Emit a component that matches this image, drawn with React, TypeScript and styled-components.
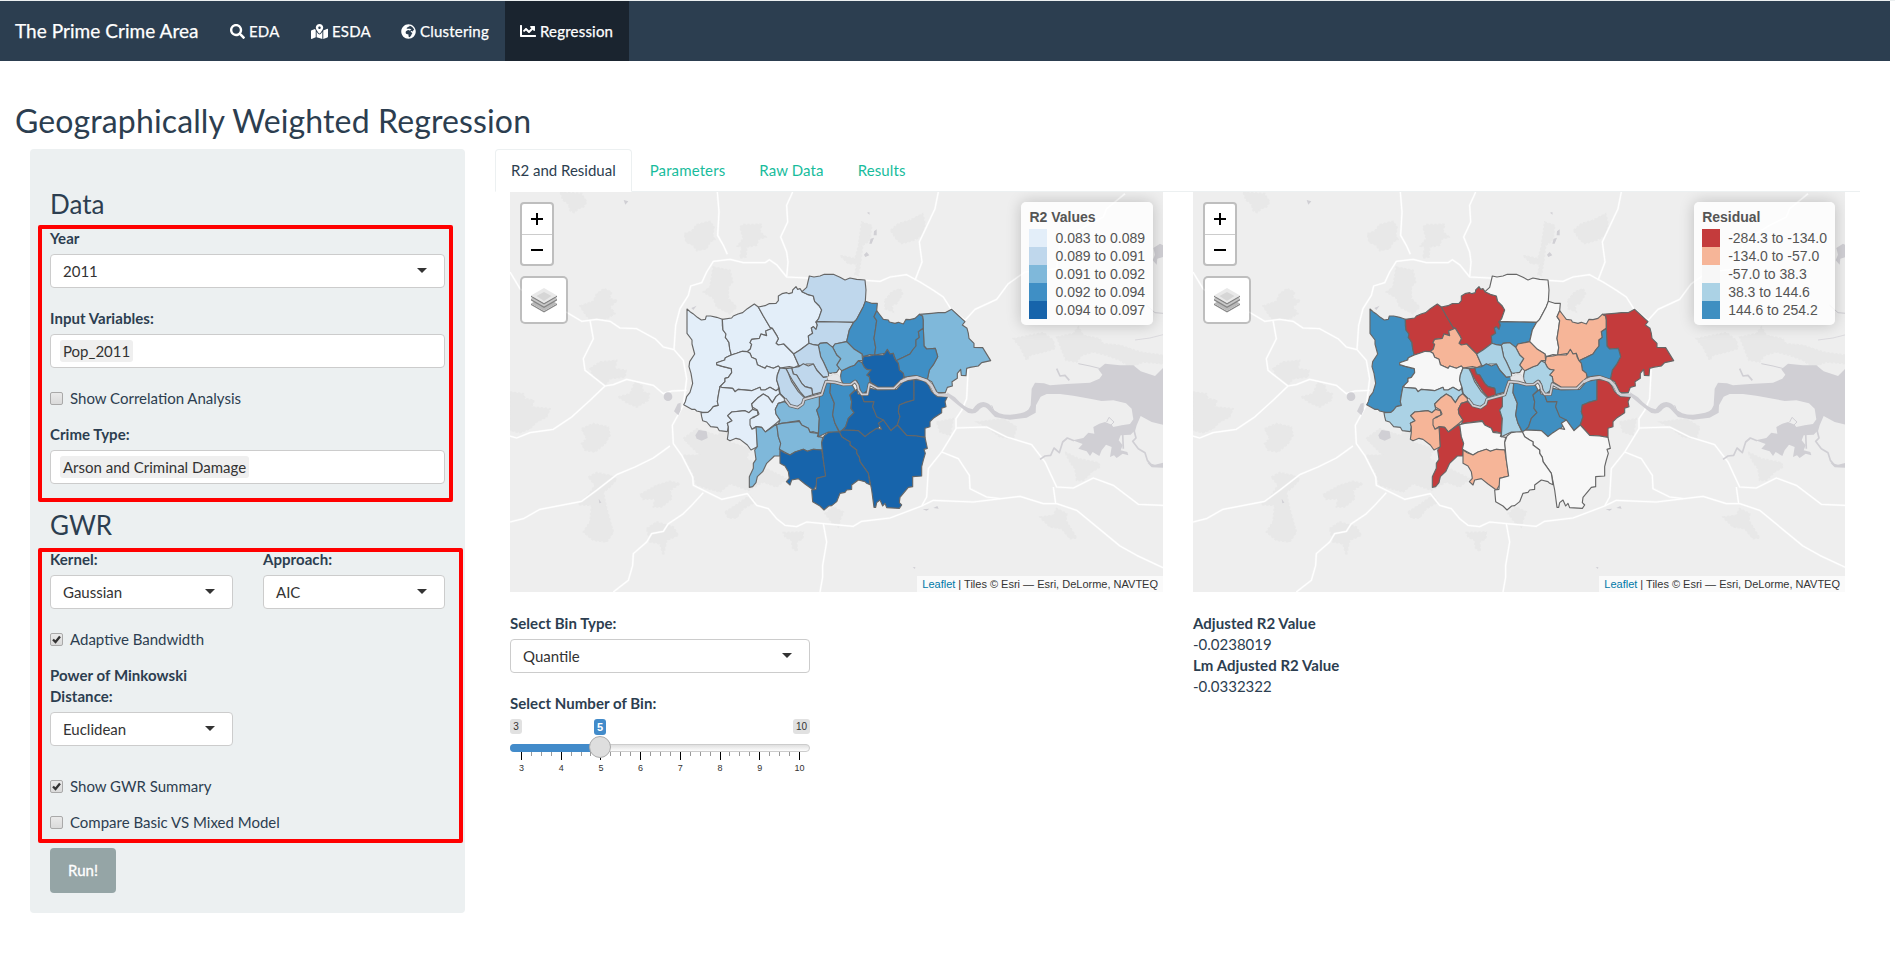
import React from "react";
import styled, { createGlobalStyle } from "styled-components";
import { FaSearch, FaMapMarkedAlt, FaGlobeAfrica, FaChartLine } from "react-icons/fa";

const GlobalStyle = createGlobalStyle`
  * { box-sizing: border-box; }
  body {
    margin: 0;
    background: #fff;
    color: #2c3e50;
    font: 400 15px/21px Lato, "Helvetica Neue", sans-serif;
  }
`;

const Page = styled.div`
  height: 960px;
  overflow: hidden;
  border-top: 1px solid #ecf0f1;
`;

const Navbar = styled.nav`
  display: flex;
  width: 1890px;
  height: 60px;
  background: #2c3e50;
  color: #fff;
  -webkit-text-stroke: 0.25px #fff;
`;

const Brand = styled.div`
  width: 215px;
  padding-left: 15px;
  font-size: 19px;
  line-height: 60px;
  letter-spacing: 0.05px;
  white-space: nowrap;
`;

const NavItem = styled.div<{ $width: number; $active?: boolean }>`
  display: flex;
  align-items: center;
  gap: 4px;
  width: ${(p) => p.$width}px;
  padding-left: 15px;
  background: ${(p) => (p.$active ? "#1a242f" : "transparent")};
  letter-spacing: 0.2px;
  white-space: nowrap;
  svg { flex: none; }
`;

const Title = styled.h2`
  margin: 42px 0 0 15px;
  height: 46px;
  font-size: 32px;
  font-weight: 400;
  line-height: 35px;
  letter-spacing: 0.13px;
`;

const Columns = styled.div`
  display: flex;
  align-items: flex-start;
  padding-left: 30px;
`;

const Well = styled.aside`
  position: relative;
  width: 435px;
  height: 764px;
  padding: 41px 20px 20px;
  background: #ecf0f1;
  border-radius: 4px;
`;

const Heading = styled.h3`
  margin: 0;
  height: 38px;
  font-size: 26px;
  font-weight: 400;
  line-height: 29px;
`;

const Field = styled.div<{ $width?: string; $gap?: number }>`
  width: ${(p) => p.$width || "100%"};
  margin-bottom: ${(p) => p.$gap ?? 20}px;
`;

const Label = styled.label`
  display: block;
  margin-bottom: 5px;
  font-weight: 700;
  letter-spacing: 0.05px;
`;

const SelectBox = styled.div`
  display: flex;
  align-items: center;
  justify-content: space-between;
  height: 34px;
  padding: 1px 17px 0 12px;
  border: 1px solid #ccc;
  border-radius: 4px;
  background: #fff;
  color: #333;
`;

const Caret = styled.span`
  margin-top: -3px;
  border: 5px solid transparent;
  border-top-color: #333;
  border-bottom: 0;
`;

const Tag = styled.span`
  margin: -1px 0 0 -3px;
  padding: 0 3px;
  height: 22px;
  line-height: 22px;
  border-radius: 3px;
  background: #efefef;
`;

const Pair = styled.div`
  display: flex;
  justify-content: space-between;
`;

const CheckRow = styled.div<{ $gap: number }>`
  display: flex;
  align-items: center;
  gap: 7px;
  height: 21px;
  margin-bottom: ${(p) => p.$gap}px;
`;

const CheckMark = styled.span`
  display: flex;
  width: 13px;
  height: 13px;
  border: 1px solid #a9a9a9;
  border-radius: 2px;
  background: linear-gradient(#eaeaea, #dadada);
`;

const RunButton = styled.button`
  width: 66px;
  height: 45px;
  padding: 0;
  border: 0;
  border-radius: 4px;
  background: #95a5a6;
  color: #fff;
  font: 400 15px/21px Lato, sans-serif;
  -webkit-text-stroke: 0.3px #fff;
`;

const Highlight = styled.div<{ $top: number; $width: number; $height: number }>`
  position: absolute;
  left: 8px;
  top: ${(p) => p.$top}px;
  width: ${(p) => p.$width}px;
  height: ${(p) => p.$height}px;
  border: 4px solid #f00;
  border-radius: 2px;
`;

const Main = styled.main`
  width: 1365px;
  margin-left: 30px;
`;

const Tabs = styled.div`
  display: flex;
  gap: 2px;
  height: 43px;
  border-bottom: 1px solid #ecf0f1;
`;

const Tab = styled.div<{ $active?: boolean }>`
  height: 43px;
  padding: 10px 15px;
  border: 1px solid ${(p) => (p.$active ? "#ecf0f1" : "transparent")};
  border-bottom-color: ${(p) => (p.$active ? "#fff" : "transparent")};
  border-radius: 4px 4px 0 0;
  color: ${(p) => (p.$active ? "#2c3e50" : "#18bc9c")};
  letter-spacing: ${(p) => (p.$active ? "0" : "0.12px")};
`;

const Panels = styled.div`
  display: grid;
  grid-template-columns: 653px 652px;
  gap: 30px;
  padding-left: 15px;
`;

const MapFrame = styled.div`
  position: relative;
  height: 400px;
  overflow: hidden;
  background: #eee;
  > svg { display: block; }
`;

const ZoomControl = styled.div`
  position: absolute;
  left: 10px;
  top: 10px;
  width: 34px;
  height: 64px;
  border: 2px solid rgba(0, 0, 0, 0.2);
  border-radius: 4px;
  background: #fff;
  background-clip: padding-box;
`;

const ZoomButton = styled.div`
  display: flex;
  align-items: center;
  justify-content: center;
  height: 30px;
  & + & { border-top: 1px solid #ccc; }
`;

const LayersControl = styled.div`
  position: absolute;
  left: 10px;
  top: 84px;
  display: flex;
  align-items: center;
  justify-content: center;
  width: 48px;
  height: 48px;
  border: 2px solid rgba(0, 0, 0, 0.2);
  border-radius: 5px;
  background: #fff;
  background-clip: padding-box;
`;

const Legend = styled.div`
  position: absolute;
  top: 10px;
  right: 10px;
  height: 123px;
  padding: 6px 8px;
  border-radius: 5px;
  background: rgba(255, 255, 255, 0.8);
  box-shadow: 0 0 15px rgba(0, 0, 0, 0.2);
  color: #555;
  font: 14px/18px "Liberation Sans", Arial, sans-serif;
`;

const LegendTitle = styled.div`
  height: 21px;
  font-weight: 700;
`;

const LegendRow = styled.div`
  display: flex;
  gap: 8px;
  height: 18px;
  white-space: nowrap;
`;

const Swatch = styled.span<{ $color: string }>`
  width: 18px;
  height: 18px;
  background: ${(p) => p.$color};
`;

const Attribution = styled.div`
  position: absolute;
  right: 0;
  bottom: 0;
  padding: 0 5px;
  height: 16px;
  background: rgba(255, 255, 255, 0.7);
  color: #333;
  font: 11px/16px "Liberation Sans", Arial, sans-serif;
  white-space: nowrap;
  span { color: #0078a8; }
`;

const BinControls = styled.div`
  width: 300px;
  padding-top: 21px;
`;

const SliderDrawing = styled.svg`
  display: block;
  margin-top: -3px;
  font-family: "Liberation Sans", Arial, sans-serif;
`;

const Stats = styled.div`
  padding-top: 21px;
`;

const StatName = styled.div`
  font-weight: 700;
  letter-spacing: 0.05px;
`;

const boroughs: [string, number, number, string][] = [
  ["Hillingdon", 0, 4, "51,147 60,155 69,161 82,172 94,180 106,178 109,168 122,168 140,172 157,178 157,196 159,210 168,222 166,232 172,240 177,248 179,266 184,285 166,293 164,300 140,308 140,314 157,319 184,326 185,338 175,352 165,355 165,365 150,380 146,400 142,425 145,436 130,440 122,450 114,457 98,457 80,453 75,448 65,448 41,434 46,425 50,410 60,397 68,370 63,340 57,320 59,305 74,282 66,252 66,240 51,220"],
  ["Harrow", 0, 0, "157,178 185,174 190,168 204,162 218,158 232,146 253,132 265,141 280,168 300,202 307,205 287,213 290,227 273,222 268,235 245,238 240,248 245,253 241,267 232,275 217,274 200,280 184,285 179,266 177,248 172,240 166,232 168,222 159,210"],
  ["Barnet", 0, 0, "265,141 285,137 297,131 318,130 325,122 325,108 336,101 350,98 357,101 367,98 368,90 378,80 383,88 390,86 396,95 412,103 430,108 434,124 448,138 455,150 446,176 438,186 442,195 438,208 430,200 424,204 428,220 415,228 417,250 410,255 390,270 371,282 341,252 325,255 318,250 325,236 320,226 307,205 300,202 280,168"],
  ["Enfield", 1, 2, "396,95 410,82 418,48 432,51 450,48 463,43 490,43 510,52 525,60 540,54 560,58 585,60 588,90 586,124 580,140 572,155 560,178 551,187 500,186 442,184 438,186 446,176 455,150 448,138 434,124 430,108 412,103"],
  ["Haringey", 1, 4, "438,186 500,186 551,187 538,210 530,245 495,252 488,262 470,248 450,250 445,256 430,254 417,250 415,228 428,220 424,204 430,200 438,208 442,195"],
  ["Brent", 0, 1, "307,205 320,226 325,236 318,250 325,255 341,252 371,282 386,316 372,323 358,320 330,324 325,318 310,325 290,318 285,325 262,314 258,298 245,292 240,280 232,275 241,267 245,253 240,248 245,238 268,235 273,222 290,227 287,213"],
  ["Ealing", 0, 2, "184,285 200,280 217,274 232,275 240,280 245,292 258,298 262,314 285,325 290,318 310,325 325,318 330,324 322,345 320,360 328,385 318,392 300,382 285,390 273,390 270,382 245,392 205,388 195,395 188,385 155,382 150,380 165,365 165,355 175,352 185,338 184,326 157,319 140,314 140,308 164,300 166,293"],
  ["Hounslow", 0, 3, "150,380 155,382 188,385 195,395 205,388 245,392 270,382 273,390 285,390 300,382 318,392 328,385 330,400 318,410 307,428 294,410 280,402 262,415 245,432 248,448 237,458 225,452 185,456 173,467 186,482 172,490 175,500 172,515 148,512 142,502 122,500 110,486 98,482 95,470 93,458 114,457 122,450 130,440 145,436 142,425 146,400"],
  ["Richmond", 0, 1, "245,432 262,415 280,402 294,410 307,428 318,410 330,400 344,411 343,425 325,430 316,448 318,462 330,480 318,490 286,516 275,502 258,500 245,508 237,493 238,475 252,472 267,462 262,450 248,442"],
  ["Richmond riverside", 0, 1, "248,448 262,452 264,465 248,472 240,478 240,495 246,508 260,502 262,560 243,570 232,555 210,538 198,535 180,542 172,538 175,517 175,500 172,490 186,482 173,467 185,456 225,452 237,458"],
  ["Kingston", 2, 0, "258,500 275,502 286,516 320,492 323,510 325,530 332,550 330,588 313,588 290,610 278,635 262,650 258,668 248,680 238,682 238,650 250,625 250,610 258,598 254,570 262,560"],
  ["Waltham Forest", 3, 2, "586,124 605,130 622,130 620,152 612,170 620,182 616,210 612,235 617,262 614,285 600,284 580,290 576,282 553,268 530,245 538,210 551,187 560,178 572,155 580,140"],
  ["Redbridge", 3, 1, "620,152 630,165 640,178 655,180 658,186 675,190 685,187 700,192 708,178 720,179 735,175 748,163 758,168 760,180 760,205 745,215 748,232 738,240 738,258 728,270 720,282 700,292 678,302 670,280 660,282 652,270 645,280 614,285 617,262 612,235 616,210 620,182 612,170"],
  ["Havering", 2, 0, "748,163 785,160 805,158 825,158 845,148 860,162 885,185 877,195 891,205 895,220 897,235 912,250 912,262 938,263 962,302 935,308 925,318 900,322 890,325 888,347 874,346 872,328 862,340 862,355 846,365 847,378 832,382 826,398 802,398 795,385 785,365 772,358 778,330 790,314 803,290 796,265 770,267 762,258 760,205 760,180 758,168"],
  ["Barking and Dagenham", 3, 4, "760,205 762,258 770,267 796,265 803,290 790,314 778,330 772,358 750,350 735,347 715,350 702,352 700,340 688,330 685,310 678,302 700,292 720,282 728,270 738,258 738,240 748,232 745,215"],
  ["Newham", 4, 1, "580,290 600,288 614,285 640,285 645,280 652,268 660,282 670,280 672,290 678,302 685,310 688,330 700,340 702,352 685,368 670,382 625,382 600,366 598,350 590,345 603,330 590,328 583,322 576,308"],
  ["Tower Hamlets", 3, 3, "512,345 515,332 540,320 553,316 565,302 576,308 583,322 590,328 603,330 590,345 598,350 600,366 592,402 572,400 568,380 560,362 545,370 520,372 512,358"],
  ["Hackney", 2, 1, "530,245 553,268 576,282 578,302 565,302 553,316 540,320 515,332 508,325 500,315 512,296 500,285 488,262 495,252"],
  ["Islington", 2, 3, "445,256 450,250 470,248 488,262 500,285 512,296 500,315 508,325 500,337 480,340 475,338 460,305 452,290"],
  ["Camden", 1, 3, "417,250 430,254 445,256 452,290 460,305 475,338 476,350 460,352 440,330 430,312 410,312 392,318 386,316 371,282 390,270"],
  ["Westminster", 1, 4, "365,324 386,320 400,311 415,318 430,312 440,330 460,352 476,350 472,360 462,395 428,404 425,385 405,380 395,370 380,345 370,342"],
  ["Kensington and Chelsea", 1, 0, "348,326 365,324 370,342 380,345 395,370 405,380 425,385 428,404 405,412 390,395 370,365 355,340"],
  ["Hammersmith and Fulham", 1, 3, "330,324 348,326 355,340 365,365 385,395 403,413 395,435 380,442 360,435 345,415 330,400 328,385 320,360 322,345"],
  ["Wandsworth", 2, 0, "316,448 325,430 343,425 360,438 385,442 400,425 415,412 452,405 448,440 440,450 448,475 445,520 430,515 420,517 415,505 395,495 388,482 335,490 325,492 330,480 318,462"],
  ["Merton", 2, 2, "320,494 335,490 388,484 395,495 415,505 420,517 445,520 442,529 458,532 455,548 458,570 430,568 412,574 400,568 375,576 360,585 328,568 332,550 325,530"],
  ["Sutton", 4, 1, "330,570 343,578 360,585 375,576 400,568 412,574 430,568 455,570 460,600 467,648 440,655 440,675 430,690 405,672 385,656 365,660 360,675 349,665 358,655 355,635 345,618 330,610"],
  ["Lambeth", 3, 3, "448,408 460,400 468,365 482,370 480,398 493,430 488,465 495,490 508,518 475,516 445,530 448,475 440,450 448,440"],
  ["Southwark", 3, 4, "472,365 520,374 545,372 555,390 540,405 545,425 543,445 552,458 535,475 527,500 510,518 495,490 488,465 493,430 480,398 482,370"],
  ["Lewisham", 4, 4, "540,405 560,388 564,402 575,405 582,425 612,425 608,440 615,455 640,480 632,495 620,510 600,518 585,530 565,512 518,510 527,500 535,475 552,458 543,445 545,425"],
  ["Greenwich", 4, 4, "575,405 600,385 625,390 680,388 700,365 732,358 732,420 705,428 688,435 685,455 690,470 682,495 663,512 640,480 620,470 608,440 612,425 582,425"],
  ["Bexley", 4, 0, "732,358 760,362 775,375 785,395 802,410 832,410 825,425 828,440 815,445 815,458 790,475 780,485 780,500 765,505 765,532 740,528 710,526 682,495 690,470 685,455 688,435 705,428 732,420"],
  ["Bromley", 4, 2, "508,515 518,510 565,512 585,530 600,518 620,505 635,508 625,490 640,480 663,512 682,495 710,526 740,528 765,532 772,565 762,568 766,580 760,600 755,620 755,648 728,650 728,680 715,682 690,712 688,728 695,735 688,745 650,743 645,730 638,738 630,720 620,728 617,742 612,742 605,690 595,640 570,605 568,592 560,580 560,570 540,555 540,545 530,540 515,530"],
  ["Croydon", 4, 2, "475,518 490,516 508,515 515,530 530,540 540,545 540,555 560,570 560,580 568,592 570,605 595,640 600,674 590,670 585,665 565,660 545,675 545,688 530,690 525,697 510,700 500,725 485,737 476,738 462,750 450,738 428,725 425,690 438,688 440,655 467,648 460,600 455,548 462,528"],
];

const roads = [
  "0,240 30,290 80,330 172,362 215,388 260,382 300,388 330,408 380,410 435,440 460,465 492,473",
  "492,473 497,400 510,350 535,310 542,282 575,272 590,240 610,208 660,202 700,212 765,212 778,203 800,218 830,255 890,258 1065,265 1110,268 1140,255 1190,248 1230,270 1270,295 1300,315 1322,350 1365,385",
  "1375,520 1370,620 1355,655 1338,680 1338,710 1295,780 1255,830 1250,915 1235,942 1140,978 1055,988 1030,1003 940,995 890,990 860,1004 825,1000 800,980 775,950 740,940 712,905 635,922 580,895 550,880 548,855 515,790 490,755 487,700 520,640 530,560 520,505 492,473",
  "240,385 250,440 220,500 225,535 285,582 310,578 350,562 430,580 460,605 485,597 530,595",
  "285,582 240,625 185,675 130,712 60,722 20,738 0,732",
  "0,990 40,980 90,952 215,928 260,895 320,848 375,825 430,798 480,762",
  "580,902 545,940 520,965 475,995 460,1018 425,1025 410,1050 370,1085 368,1120 355,1165 310,1200",
  "940,995 950,1050 938,1120 938,1155 930,1200",
  "622,0 627,60 623,130 640,160 652,187",
  "848,0 830,40 833,90 812,135 830,180 834,210 830,255",
  "1285,0 1275,50 1228,150 1236,210 1215,265",
  "1365,385 1395,352 1460,322 1495,275 1545,240 1640,230 1650,150 1730,100 1780,75 1790,50 1845,5",
  "1338,708 1430,705 1490,735 1565,758 1605,810 1640,885 1690,888 1750,858 1810,880 1885,937 1959,940",
  "1295,780 1345,800 1378,850 1380,890 1430,915 1470,920",
  "1235,942 1270,925 1390,930 1530,913 1600,935 1640,935 1700,955 1830,1062 1880,1090 1959,1127",
  "1630,885 1637,935",
];

/* Built-up areas around the city */
const towns = [
  "150,0 215,5 230,30 220,45 205,50 192,62 180,55 175,35 160,25",
  "523,125 545,118 560,98 600,88 612,105 608,130 615,142 600,150 590,170 560,176 550,160 528,150",
  "690,105 700,98 755,97 750,120 768,135 745,142 740,160 710,165 708,195 690,198 695,165 682,162 700,140",
  "210,342 250,328 260,305 282,290 305,300 298,320 322,325 300,345 315,365 290,380 240,385 225,365",
  "240,530 270,510 320,505 315,530 348,535 345,555 300,560 285,580 255,560",
  "0,600 40,605 45,620 72,625 65,645 120,650 110,675 80,690 60,710 30,722 0,715",
  "215,710 250,695 295,705 300,730 285,755 255,780 225,775 215,755 230,740",
  "325,615 360,605 375,570 395,580 400,600 418,605 415,625 380,645 350,632",
  "610,225 660,235 668,270 655,285 655,320 680,345 660,365 620,345 610,318 580,300 600,285",
  "235,855 260,842 300,850 320,862 300,885 280,900 290,950 310,1020 290,1050 250,1045 220,1020 240,990 245,940 205,938 235,910 255,880",
  "390,908 440,880 480,868 510,875 480,895 485,920 455,945 430,945 435,920 400,922",
  "410,1010 440,990 490,1005 505,1030 470,1045 460,1090 450,1055 420,1050",
  "645,960 680,938 720,910 735,930 700,950 680,978 655,978",
  "820,1022 880,1020 878,1040 860,1050 862,1078 848,1070 845,1045 825,1035",
  "1142,115 1165,95 1200,85 1238,65 1245,95 1238,130 1210,145 1175,155 1158,140",
  "1055,90 1085,100 1080,145 1058,160 1052,210 1045,250 1035,248 1040,215 1015,215 990,190 1035,200 1045,165",
  "1125,325 1145,300 1170,290 1178,305 1160,335 1145,340 1150,360 1125,350",
  "520,740 560,710 620,730 650,715 660,750 720,770 710,800 830,860 800,885 760,870 715,895 660,875 630,900 560,880 550,845 520,790 570,790",
  "1510,440 1560,430 1600,422 1630,445 1635,470 1600,480 1560,490 1550,505 1530,465",
  "1640,435 1690,425 1705,405 1720,430 1768,440 1780,455 1830,460 1890,480 1959,490 1959,515 1900,510 1860,525 1830,505 1790,490 1750,480 1715,490 1700,510 1668,505",
  "1665,780 1705,800 1765,812 1770,825 1745,840 1720,865 1700,865 1695,830 1680,810",
  "1590,975 1630,970 1640,950 1670,965 1668,985 1680,1005 1700,1038 1680,1040 1655,1010 1620,1005",
  "1400,690 1480,680 1520,705 1510,740 1470,735 1430,705",
  "945,965 970,945 1000,960 990,985 985,1005 965,990",
  "1280,690 1330,680 1320,730 1290,720",
];

const thames = "345,417 360,437 383,443 398,432 402,418 455,404 462,382 468,365 495,367 520,374 543,373 555,364 563,375 566,390 575,403 592,403 598,372 622,385 672,385 692,365 712,356 740,352 770,362 785,378 795,398 805,405 832,407";

function LondonMap({ palette, layer, width }: { palette: string[]; layer: 1 | 2; width: number }) {
  return (
    <svg width={width} height={400} viewBox={`0 0 ${width * 3} 1200`}>
      <g fill="#e8e8e8" stroke="#e8e8e8" strokeWidth="5" strokeDasharray="7 5">
        {towns.map((t) => <polygon key={t} points={t} />)}
      </g>
      <g fill="none" stroke="#f8f8f8" strokeWidth="7" strokeLinejoin="round" opacity=".6">
        {roads.map((r) => <polyline key={r} points={r} />)}
      </g>
      <g fill="none" stroke="#fff" strokeWidth="3.6" strokeLinejoin="round">
        {roads.map((r) => <polyline key={r} points={r} />)}
      </g>
      <g fill="#d0cfd4">
        <path d="M1310 600 L1335 616 Q1365 650 1388 652 Q1402 630 1420 630 Q1440 632 1448 650 Q1462 668 1500 668 Q1545 665 1556 652 L1562 640 L1565 590 L1575 572 L1602 574 L1620 580 L1670 576 L1740 572 L1768 560 L1777 548 L1765 532 L1785 515 L1830 520 L1870 520 L1892 538 L1935 552 L1959 528 V698 L1925 690 L1892 672 L1880 700 L1875 718 L1830 718 L1795 708 L1835 700 L1860 696 L1870 682 L1865 650 L1848 634 L1810 625 L1775 627 L1740 620 L1690 611 L1650 606 L1610 606 L1592 614 L1578 640 L1577 662 L1550 677 L1500 683 L1455 675 L1432 650 Q1420 638 1405 656 Q1395 668 1375 663 Q1350 645 1315 615 Z" />
        <path d="M1688 745 L1720 738 L1735 722 L1753 725 L1750 705 L1768 695 L1785 690 L1805 698 L1812 708 L1850 712 L1875 715 L1862 728 L1832 730 L1826 745 L1838 760 L1832 775 L1852 780 L1855 790 L1838 785 L1820 798 L1812 790 L1800 795 L1805 765 L1788 758 L1775 775 L1768 792 L1748 780 L1740 792 L1730 778 L1705 770 L1718 756 Z" />
        <path d="M1930 168 L1950 155 L1959 160 V195 L1942 200 L1940 218 L1928 205 L1935 188 Z M1912 812 L1935 818 L1959 812 V827 L1925 826 Z" />
        <ellipse cx="474" cy="614" rx="13" ry="13" />
        <path d="M503 635 L512 632 L512 655 L505 670 L492 658 Z M556 730 L566 714 L590 718 L593 738 L575 746 L560 740 Z M544 348 L560 341 L550 354 Z M341 24 L355 28 L346 38 Z M1078 155 L1082 140 L1092 137 L1085 155 Z M1062 188 L1070 180 L1078 190 L1066 195 Z M1092 118 L1100 112 L1100 130 L1091 130 Z M1071 62 L1078 60 L1079 68 Z M1238 952 L1258 950 L1250 956 Z M1270 948 L1282 942 L1286 950 Z M1208 1126 L1216 1125 L1215 1131 Z M266 920 L274 932 L268 934 Z" />
      </g>
      <g fill="none" stroke="#d0cfd4" strokeWidth="5" strokeLinejoin="round">
        <polyline points="1590,802 1605,792 1622,790 1632,768 1648,782 1658,750 1672,738 1692,746" />
        <polyline points="1872,715 1878,738 1868,748 1885,770 1905,782 1912,805 1925,820" />
        <polyline points="1640,530 1650,552 1665,550 1678,565" />
        <polyline points="1705,515 1740,522 1772,530" strokeWidth="3" />
        <polyline points="1875,444 1920,438 1959,428" strokeWidth="2" />
        <polyline points="1910,340 1935,362 1959,364" strokeWidth="3" />
        <polyline points="1790,690 1797,676 1812,690 1802,700" strokeWidth="3" />
        <polyline points="1445,640 1452,658 1462,662" strokeWidth="3" />
        <polyline points="1838,725 1840,770" />
      </g>
      <g transform="translate(480 204)" stroke="#666" strokeWidth="3.4" strokeLinejoin="round">
        {boroughs.map(([name, r2, residual, points]) => (
          <polygon key={name} points={points} fill={palette[layer === 1 ? r2 : residual]} />
        ))}
        <polygon points="472,350 486,346 487,339 495,343 502,342 510,350 512,363 474,363" fill="#e6e6e8" stroke="#bbb" strokeWidth="1" />
        <polyline points={thames} fill="none" strokeWidth="10" />
        <polyline points={thames} fill="none" stroke="#d0cfd4" strokeWidth="5" />
        <polyline points="692,365 712,356 740,352 770,362 785,378 795,398 805,405 840,407" fill="none" stroke="#d0cfd4" strokeWidth="8" />
        <polyline points="325,382 330,402 345,417" fill="none" strokeWidth="4" />
      </g>
    </svg>
  );
}

const r2Palette = ["#e3eef9", "#bfd7ec", "#7fb8da", "#3f8fc5", "#1764ab"];
const residualPalette = ["#c43b3c", "#f6b598", "#f7f7f7", "#abd2e5", "#3f8fc1"];

function MapView(props: { title: string; ranges: string[]; palette: string[]; layer: 1 | 2; width: number }) {
  return (
    <MapFrame>
      <LondonMap palette={props.palette} layer={props.layer} width={props.width} />
      <ZoomControl>
        <ZoomButton>
          <svg width="12" height="12"><path d="M0 6H12M6 0V12" stroke="#000" strokeWidth="2" /></svg>
        </ZoomButton>
        <ZoomButton>
          <svg width="12" height="12"><path d="M0 6H12" stroke="#000" strokeWidth="2" /></svg>
        </ZoomButton>
      </ZoomControl>
      <LayersControl>
        <svg width="26" height="26" viewBox="0 0 26 26">
          <path d="M0 16.5V18L13 25.5L26 18V16.5L13 24Z" fill="#888" />
          <path d="M0 16.5L13 9L26 16.5L13 24Z" fill="#b9b9b9" />
          <path d="M0 13.5L13 21L26 13.5V12L13 5L0 12Z" fill="#858585" />
          <path d="M0 12L13 5L26 12L13 19.5Z" fill="#c9c9c9" />
          <path d="M0 8.5V10L13 17.5L26 10V8.5L13 16Z" fill="#858585" />
          <path d="M0 8.5L13 1L26 8.5L13 16Z" fill="#e9e9e9" />
          <path d="M5.500 9L13 5L20.500 9L13 14Z" fill="#d6d6d6" />
        </svg>
      </LayersControl>
      <Legend>
        <LegendTitle>{props.title}</LegendTitle>
        {props.ranges.map((range, i) => (
          <LegendRow key={range}>
            <Swatch $color={props.palette[i]} />
            {range}
          </LegendRow>
        ))}
      </Legend>
      <Attribution><span>Leaflet</span> | Tiles © Esri — Esri, DeLorme, NAVTEQ</Attribution>
    </MapFrame>
  );
}

function Select({ label, value, tag, width, gap }: { label: React.ReactNode; value: string; tag?: boolean; width?: string; gap?: number }) {
  return (
    <Field $width={width} $gap={gap}>
      <Label>{label}</Label>
      <SelectBox>
        {tag ? <Tag>{value}</Tag> : <><span>{value}</span><Caret /></>}
      </SelectBox>
    </Field>
  );
}

function Check({ text, checked, gap }: { text: string; checked?: boolean; gap: number }) {
  return (
    <CheckRow $gap={gap}>
      <CheckMark>
        {checked && (
          <svg width="11" height="11"><path d="M2 5.500L4.500 8L9 2.500" fill="none" stroke="#333" strokeWidth="2.300" /></svg>
        )}
      </CheckMark>
      {text}
    </CheckRow>
  );
}

function Slider() {
  const values = [3, 4, 5, 6, 7, 8, 9, 10];
  const x = (v: number) => 11.5 + (v - 3) * 39.71;
  const minor = Array.from({ length: 29 }, (_, i) => 3 + i / 4).filter((v) => v % 1 !== 0);
  return (
    <SliderDrawing width="300" height="60">
      <defs>
        <linearGradient id="track" x1="0" y1="0" x2="0" y2="1">
          <stop offset="0" stopColor="#ddd" />
          <stop offset="1" stopColor="#fff" />
        </linearGradient>
      </defs>
      <rect y="3" width="12" height="15" rx="3" fill="#e1e1e1" />
      <text x="6" y="14" fontSize="10" textAnchor="middle" fill="#333">3</text>
      <rect x="283" y="3" width="17" height="15" rx="3" fill="#e1e1e1" />
      <text x="291.500" y="14" fontSize="10" textAnchor="middle" fill="#333">10</text>
      <rect x="84" y="3" width="12" height="16" rx="3" fill="#428bca" />
      <text x="90" y="15" fontSize="11" fontWeight="700" textAnchor="middle" fill="#fff">5</text>
      <rect x=".5" y="28.500" width="299" height="7" rx="3.500" fill="url(#track)" stroke="#ccc" />
      <path d="M90 28H4Q0 28 0 32Q0 36 4 36H90Z" fill="#428bca" />
      {minor.map((v) => <rect key={v} x={Math.round(x(v) - 0.5)} y="36" width="1" height="4" fill="#999" />)}
      {values.map((v) => (
        <g key={v}>
          <rect x={Math.round(x(v) - 0.5)} y="36" width="1" height="8" fill="#000" />
          <text x={x(v)} y="55" fontSize="9" textAnchor="middle" fill="#333">{v}</text>
        </g>
      ))}
      <circle cx="90" cy="31" r="10.500" fill="#dedede" stroke="#ababab" />
    </SliderDrawing>
  );
}

export default function App() {
  return (
    <Page>
      <GlobalStyle />
      <Navbar>
        <Brand>The Prime Crime Area</Brand>
        <NavItem $width={81}><FaSearch size={15} /> EDA</NavItem>
        <NavItem $width={90}><FaMapMarkedAlt size={17} /> ESDA</NavItem>
        <NavItem $width={119}><FaGlobeAfrica size={15} /> Clustering</NavItem>
        <NavItem $width={124} $active><FaChartLine size={16} /> Regression</NavItem>
      </Navbar>
      <Title>Geographically Weighted Regression</Title>
      <Columns>
        <Well>
          <Heading>Data</Heading>
          <Select label="Year" value="2011" />
          <Select label="Input Variables:" value="Pop_2011" tag />
          <Check text="Show Correlation Analysis" gap={15} />
          <Select label="Crime Type:" value="Arson and Criminal Damage" tag gap={27} />
          <Heading>GWR</Heading>
          <Pair>
            <Select label="Kernel:" value="Gaussian" width="183px" />
            <Select label="Approach:" value="AIC" width="182px" />
          </Pair>
          <Check text="Adaptive Bandwidth" checked gap={15} />
          <Select label={<>Power of Minkowski<br />Distance:</>} value="Euclidean" width="183px" gap={30} />
          <Check text="Show GWR Summary" checked gap={15} />
          <Check text="Compare Basic VS Mixed Model" gap={15} />
          <RunButton>Run!</RunButton>
          <Highlight $top={76} $width={415} $height={277} />
          <Highlight $top={399} $width={425} $height={295} />
        </Well>
        <Main>
          <Tabs>
            <Tab $active>R2 and Residual</Tab>
            <Tab>Parameters</Tab>
            <Tab>Raw Data</Tab>
            <Tab>Results</Tab>
          </Tabs>
          <Panels>
            <section>
              <MapView
                title="R2 Values"
                ranges={["0.083 to 0.089", "0.089 to 0.091", "0.091 to 0.092", "0.092 to 0.094", "0.094 to 0.097"]}
                palette={r2Palette}
                layer={1}
                width={653}
              />
              <BinControls>
                <Select label="Select Bin Type:" value="Quantile" />
                <Label>Select Number of Bin:</Label>
                <Slider />
              </BinControls>
            </section>
            <section>
              <MapView
                title="Residual"
                ranges={["-284.3 to -134.0", "-134.0 to -57.0", "-57.0 to 38.3", "38.3 to 144.6", "144.6 to 254.2"]}
                palette={residualPalette}
                layer={2}
                width={652}
              />
              <Stats>
                <StatName>Adjusted R2 Value</StatName>
                <div>-0.0238019</div>
                <StatName>Lm Adjusted R2 Value</StatName>
                <div>-0.0332322</div>
              </Stats>
            </section>
          </Panels>
        </Main>
      </Columns>
    </Page>
  );
}
